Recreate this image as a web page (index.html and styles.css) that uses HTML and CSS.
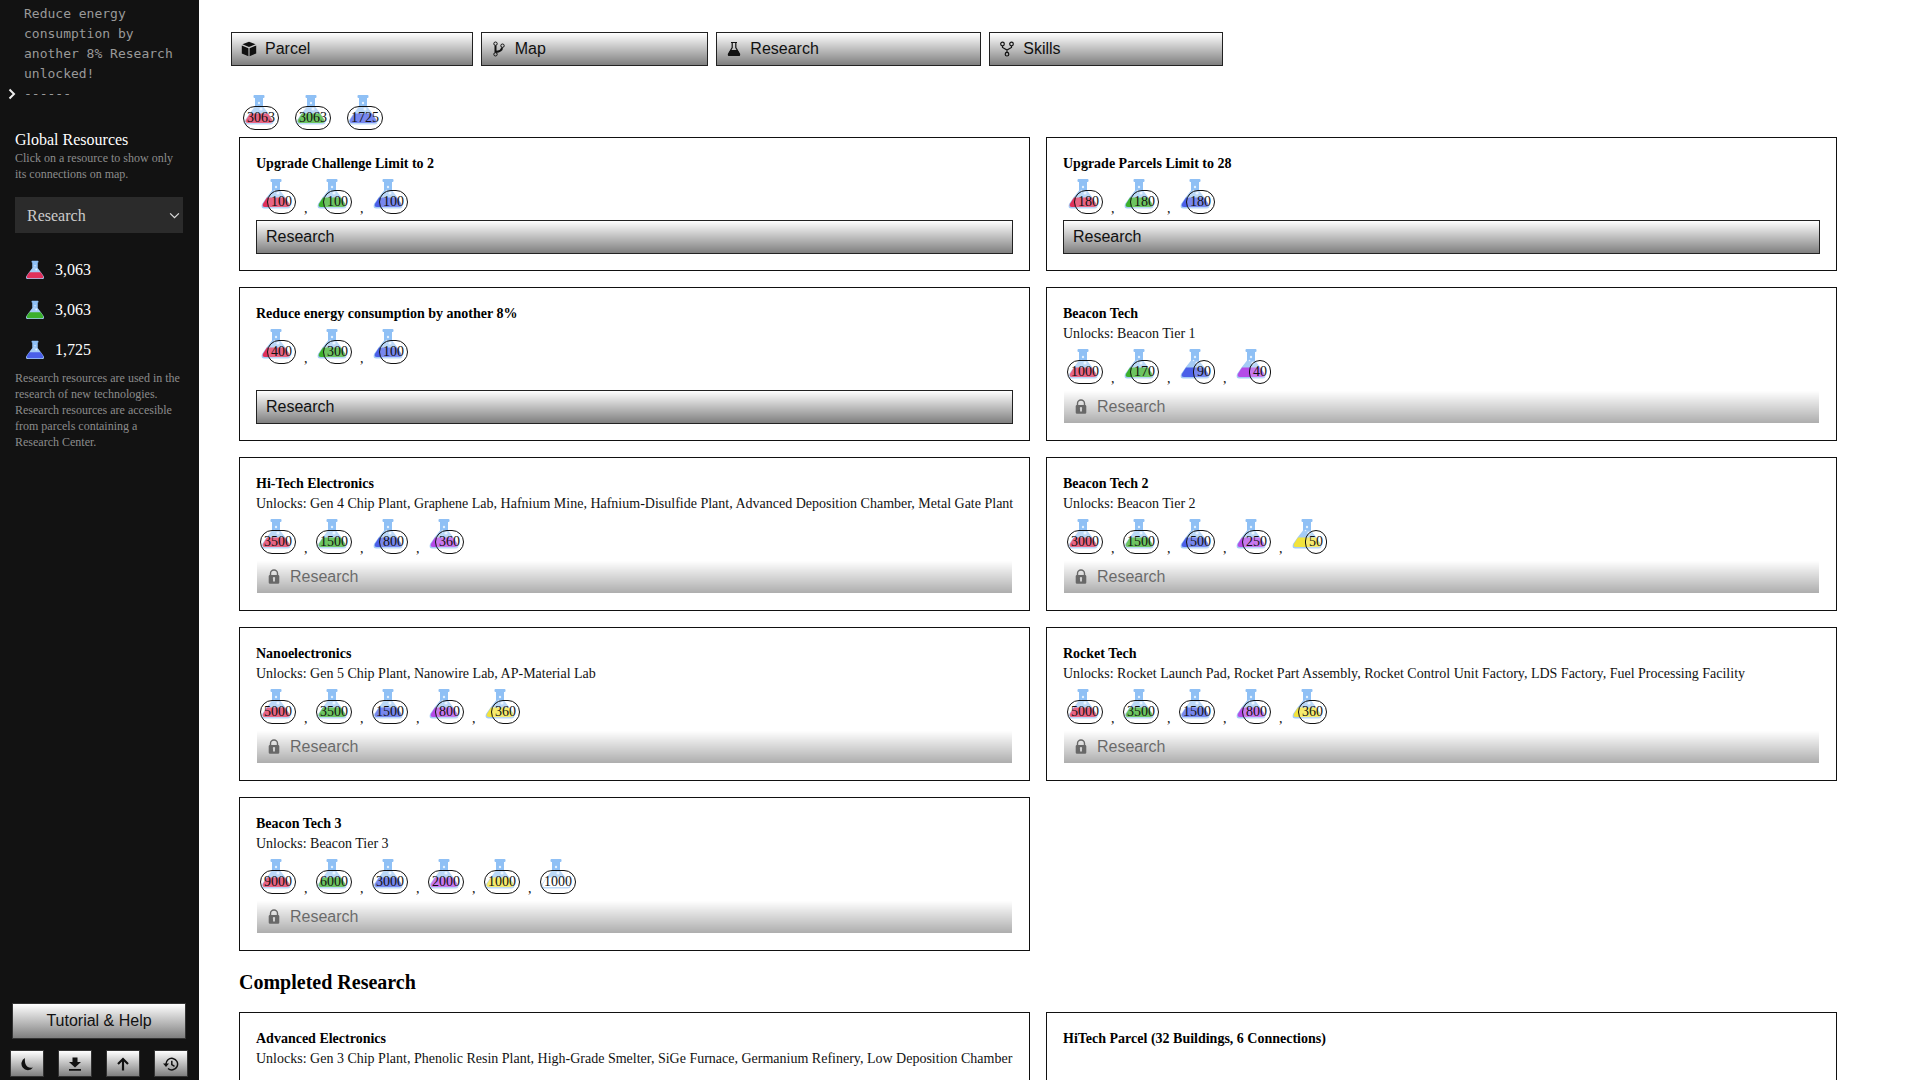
FILE: index.html
```
<!DOCTYPE html>
<html lang="en">
<head>
  <meta charset="UTF-8">
  <title>Research</title>
  <link rel="stylesheet" href="styles.css">
</head>
<body>
  <!-- shared icons -->
  <svg class="sprite" aria-hidden="true">
    <symbol id="flask" viewBox="0 0 32 32">
      <path d="M12 3h8v9.500l5.500 7 4.500 6.500Q31.500 30.500 27.500 30.500h-23Q.5 30.500 2 26l4.500-6.500 5.500-7z" fill="#a4cbf5"/>
      <path d="M7 19.500h18l4 6.200q1.200 3.300-2 3.300H5q-3.200 0-2-3.300z" fill="currentColor"/>
      <path d="M11.500 1h9q1 0 1 1v1q0 1-1 1H20v8.500h-8V4h-.5q-1 0-1-1V2q0-1 1-1z" fill="#8fc0f5"/>
      <circle cx="16" cy="9" r="1.200" fill="#e4f1ff"/>
      <circle cx="18" cy="15" r="1.600" fill="#e4f1ff"/>
      <circle cx="14.500" cy="12.500" r=".8" fill="#e4f1ff"/>
    </symbol>
    <symbol id="lock" viewBox="0 0 16 16">
      <path d="M4.500 7V4.500a3.500 3.500 0 0 1 7 0V7" fill="none" stroke="currentColor" stroke-width="1.400"/>
      <path fill-rule="evenodd" d="M4 6h8q1.300 0 1.300 1.300v6.200q0 1.300-1.300 1.300H4q-1.300 0-1.300-1.300V7.300Q2.700 6 4 6zm3 3.800v2.700h2V9.800a1.200 1.200 0 1 0-2 0z"/>
    </symbol>
  </svg>

  <div class="layout">
    <aside class="sidebar">
      <div class="log">
        <p>Reduce energy consumption by another 8% Research unlocked!</p>
        <p class="log-last">
          <svg class="chevron" viewBox="0 0 8 12"><path d="M1.500 1.500L6 6l-4.500 4.500" fill="none" stroke="currentColor" stroke-width="2"/></svg>
          ------
        </p>
      </div>

      <h2 class="side-title"><label for="resource-type">Global Resources</label></h2>
      <p class="hint">Click on a resource to show only its connections on map.</p>
      <div class="select-wrap">
        <select id="resource-type">
          <option>Research</option>
        </select>
        <svg class="caret" viewBox="0 0 12 8"><path d="M1 1.500l5 5 5-5" fill="none" stroke="currentColor" stroke-width="1.400"/></svg>
      </div>
      <ul class="resources">
        <li><svg class="red"><use href="#flask"/></svg>3,063</li>
        <li><svg class="green"><use href="#flask"/></svg>3,063</li>
        <li><svg class="blue"><use href="#flask"/></svg>1,725</li>
      </ul>
      <p class="hint">Research resources are used in the research of new technologies. Research resources are accesible from parcels containing a Research Center.</p>

      <div class="side-actions">
        <button class="btn btn-help">Tutorial &amp; Help</button>
        <div class="tools">
          <button class="btn btn-tool" aria-label="Dark mode">
            <svg class="icon" viewBox="0 0 16 16"><path d="M6 2A6.400 6.400 0 1 0 14 11.500Q8 12.500 6.500 8 5.500 5 6 2z"/></svg>
          </button>
          <button class="btn btn-tool" aria-label="Download save">
            <svg class="icon" viewBox="0 0 16 16"><path d="M5.500 1.500h5V6H14l-6 5.500L2 6h3.500zM2 13h12v1.800H2z"/></svg>
          </button>
          <button class="btn btn-tool" aria-label="Upload save">
            <svg class="icon" viewBox="0 0 16 16"><path d="M8 14.500V3M3 8l5-5 5 5" fill="none" stroke="currentColor" stroke-width="2.200"/></svg>
          </button>
          <button class="btn btn-tool" aria-label="History">
            <svg class="icon" viewBox="0 0 16 16"><path d="M3 8.500A5.800 5.800 0 1 1 5 12.500M8.800 4.800V8.500l2.700 1.800" fill="none" stroke="currentColor" stroke-width="1.500"/><path d="M0 7.500h6L3 11z"/></svg>
          </button>
        </div>
      </div>
    </aside>

    <main class="main">
      <nav class="tabs">
        <button class="btn">
          <svg class="icon" viewBox="0 0 16 16"><path d="M8 .8l6.600 2.500L8 6 1.400 3.300zM.8 4.500l6.600 2.700v8L.8 12.400zM15.200 4.500L8.600 7.200v8l6.600-2.800z"/></svg>
          Parcel
        </button>
        <button class="btn">
          <svg class="icon" viewBox="0 0 16 16"><g fill="none" stroke="currentColor"><circle cx="4.500" cy="2.700" r="1.700"/><circle cx="4.500" cy="13.300" r="1.700"/><circle cx="11.500" cy="4.700" r="1.700"/><path d="M4.500 4.500v7M4.500 11q6.500-.5 6.500-4.500" stroke-width="2"/></g></svg>
          Map
        </button>
        <button class="btn">
          <svg class="icon" viewBox="0 0 16 16"><path d="M5 1.500h6M6.200 1.500v5L2.500 13q-.5 1.500 1 1.500h9q1.500 0 1-1.500L9.800 6.500v-5" fill="none" stroke="currentColor" stroke-width="1.200"/><path d="M4.500 9h7l2.500 4.500-1 1.500H3l-1-1.500z"/></svg>
          Research
        </button>
        <button class="btn">
          <svg class="icon" viewBox="0 0 16 16"><g fill="none" stroke="currentColor" stroke-width="1.200"><circle cx="3.500" cy="3" r="1.800"/><circle cx="12.500" cy="3" r="1.800"/><circle cx="8" cy="13.200" r="1.800"/><path d="M3.500 5v1.500L8 9l4.500-2.500V5M8 9v2.300"/></g></svg>
          Skills
        </button>
      </nav>

      <section class="content">
        <ul class="costs totals">
          <li><span class="flask red"><svg><use href="#flask"/></svg><b>3063</b></span></li>
          <li><span class="flask green"><svg><use href="#flask"/></svg><b>3063</b></span></li>
          <li><span class="flask blue"><svg><use href="#flask"/></svg><b>1725</b></span></li>
        </ul>

        <div class="cards">
          <article class="card">
            <h3>Upgrade Challenge Limit to 2</h3>
            <ul class="costs">
              <li><span class="flask red"><svg><use href="#flask"/></svg><b>100</b></span>,</li>
              <li><span class="flask green"><svg><use href="#flask"/></svg><b>100</b></span>,</li>
              <li><span class="flask blue"><svg><use href="#flask"/></svg><b>100</b></span></li>
            </ul>
            <button class="btn">Research</button>
          </article>

          <article class="card">
            <h3>Upgrade Parcels Limit to 28</h3>
            <ul class="costs">
              <li><span class="flask red"><svg><use href="#flask"/></svg><b>180</b></span>,</li>
              <li><span class="flask green"><svg><use href="#flask"/></svg><b>180</b></span>,</li>
              <li><span class="flask blue"><svg><use href="#flask"/></svg><b>180</b></span></li>
            </ul>
            <button class="btn">Research</button>
          </article>

          <article class="card">
            <h3>Reduce energy consumption by another 8%</h3>
            <ul class="costs">
              <li><span class="flask red"><svg><use href="#flask"/></svg><b>400</b></span>,</li>
              <li><span class="flask green"><svg><use href="#flask"/></svg><b>300</b></span>,</li>
              <li><span class="flask blue"><svg><use href="#flask"/></svg><b>100</b></span></li>
            </ul>
            <button class="btn">Research</button>
          </article>

          <article class="card">
            <h3>Beacon Tech</h3>
            <p>Unlocks: Beacon Tier 1</p>
            <ul class="costs">
              <li><span class="flask red"><svg><use href="#flask"/></svg><b>1000</b></span>,</li>
              <li><span class="flask green"><svg><use href="#flask"/></svg><b>170</b></span>,</li>
              <li><span class="flask blue"><svg><use href="#flask"/></svg><b>90</b></span>,</li>
              <li><span class="flask purple"><svg><use href="#flask"/></svg><b>40</b></span></li>
            </ul>
            <button class="btn" disabled><svg class="icon"><use href="#lock"/></svg>Research</button>
          </article>

          <article class="card">
            <h3>Hi-Tech Electronics</h3>
            <p>Unlocks: Gen 4 Chip Plant, Graphene Lab, Hafnium Mine, Hafnium-Disulfide Plant, Advanced Deposition Chamber, Metal Gate Plant</p>
            <ul class="costs">
              <li><span class="flask red"><svg><use href="#flask"/></svg><b>3500</b></span>,</li>
              <li><span class="flask green"><svg><use href="#flask"/></svg><b>1500</b></span>,</li>
              <li><span class="flask blue"><svg><use href="#flask"/></svg><b>800</b></span>,</li>
              <li><span class="flask purple"><svg><use href="#flask"/></svg><b>360</b></span></li>
            </ul>
            <button class="btn" disabled><svg class="icon"><use href="#lock"/></svg>Research</button>
          </article>

          <article class="card">
            <h3>Beacon Tech 2</h3>
            <p>Unlocks: Beacon Tier 2</p>
            <ul class="costs">
              <li><span class="flask red"><svg><use href="#flask"/></svg><b>3000</b></span>,</li>
              <li><span class="flask green"><svg><use href="#flask"/></svg><b>1500</b></span>,</li>
              <li><span class="flask blue"><svg><use href="#flask"/></svg><b>500</b></span>,</li>
              <li><span class="flask purple"><svg><use href="#flask"/></svg><b>250</b></span>,</li>
              <li><span class="flask yellow"><svg><use href="#flask"/></svg><b>50</b></span></li>
            </ul>
            <button class="btn" disabled><svg class="icon"><use href="#lock"/></svg>Research</button>
          </article>

          <article class="card">
            <h3>Nanoelectronics</h3>
            <p>Unlocks: Gen 5 Chip Plant, Nanowire Lab, AP-Material Lab</p>
            <ul class="costs">
              <li><span class="flask red"><svg><use href="#flask"/></svg><b>5000</b></span>,</li>
              <li><span class="flask green"><svg><use href="#flask"/></svg><b>3500</b></span>,</li>
              <li><span class="flask blue"><svg><use href="#flask"/></svg><b>1500</b></span>,</li>
              <li><span class="flask purple"><svg><use href="#flask"/></svg><b>800</b></span>,</li>
              <li><span class="flask yellow"><svg><use href="#flask"/></svg><b>360</b></span></li>
            </ul>
            <button class="btn" disabled><svg class="icon"><use href="#lock"/></svg>Research</button>
          </article>

          <article class="card">
            <h3>Rocket Tech</h3>
            <p>Unlocks: Rocket Launch Pad, Rocket Part Assembly, Rocket Control Unit Factory, LDS Factory, Fuel Processing Facility</p>
            <ul class="costs">
              <li><span class="flask red"><svg><use href="#flask"/></svg><b>5000</b></span>,</li>
              <li><span class="flask green"><svg><use href="#flask"/></svg><b>3500</b></span>,</li>
              <li><span class="flask blue"><svg><use href="#flask"/></svg><b>1500</b></span>,</li>
              <li><span class="flask purple"><svg><use href="#flask"/></svg><b>800</b></span>,</li>
              <li><span class="flask yellow"><svg><use href="#flask"/></svg><b>360</b></span></li>
            </ul>
            <button class="btn" disabled><svg class="icon"><use href="#lock"/></svg>Research</button>
          </article>

          <article class="card">
            <h3>Beacon Tech 3</h3>
            <p>Unlocks: Beacon Tier 3</p>
            <ul class="costs">
              <li><span class="flask red"><svg><use href="#flask"/></svg><b>9000</b></span>,</li>
              <li><span class="flask green"><svg><use href="#flask"/></svg><b>6000</b></span>,</li>
              <li><span class="flask blue"><svg><use href="#flask"/></svg><b>3000</b></span>,</li>
              <li><span class="flask purple"><svg><use href="#flask"/></svg><b>2000</b></span>,</li>
              <li><span class="flask yellow"><svg><use href="#flask"/></svg><b>1000</b></span>,</li>
              <li><span class="flask white"><svg><use href="#flask"/></svg><b>1000</b></span></li>
            </ul>
            <button class="btn" disabled><svg class="icon"><use href="#lock"/></svg>Research</button>
          </article>
        </div>

        <h2 class="section-title">Completed Research</h2>
        <div class="cards">
          <article class="card">
            <h3>Advanced Electronics</h3>
            <p>Unlocks: Gen 3 Chip Plant, Phenolic Resin Plant, High-Grade Smelter, SiGe Furnace, Germanium Refinery, Low Deposition Chamber</p>
          </article>
          <article class="card">
            <h3>HiTech Parcel (32 Buildings, 6 Connections)</h3>
          </article>
        </div>
      </section>
    </main>
  </div>
</body>
</html>
```
FILE: styles.css
```
* {
  box-sizing: border-box;
}

body {
  margin: 0;
  font-family: "Liberation Serif", serif;
  font-size: 14px;
  line-height: 20px;
  color: #111;
  background: #fff;
}

h2, h3, p, ul {
  margin: 0;
  padding: 0;
}

ul {
  list-style: none;
}

.sprite {
  display: none;
}

.layout {
  display: flex;
  height: 100vh;
}

/* sidebar */
.sidebar {
  display: flex;
  flex-direction: column;
  width: 199px;
  flex-shrink: 0;
  padding: 4px 11px 3px 10px;
  background: #121212;
  color: #fff;
}

.log {
  padding: 0 0 0 14px;
  margin-bottom: 25px;
  font-family: "DejaVu Sans Mono", monospace;
  font-size: 13px;
  color: #999;
}

.log-last {
  display: flex;
  align-items: center;
  gap: 8px;
  margin-left: -16px;
}

.chevron {
  width: 8px;
  height: 12px;
  color: #eee;
}

.side-title {
  padding: 0 5px;
  font-size: 16px;
  font-weight: normal;
  line-height: 21px;
}

.hint {
  padding: 0 5px;
  font-size: 12px;
  line-height: 16px;
  color: #8c8c8c;
}

.select-wrap {
  position: relative;
  margin: 15px 5px 17px;
}

select {
  appearance: none;
  width: 100%;
  height: 36px;
  padding: 0 12px;
  border: none;
  border-radius: 0;
  background: #2b2b2b;
  color: #ccc;
  font-family: inherit;
  font-size: 16px;
}

.caret {
  position: absolute;
  right: 3px;
  top: 15px;
  width: 11px;
  height: 7px;
  color: #ddd;
}

.resources li {
  display: flex;
  align-items: center;
  gap: 10px;
  height: 40px;
  padding-left: 15px;
  font-size: 16px;
}

.resources svg {
  width: 20px;
  height: 20px;
}

.side-actions {
  margin-top: auto;
}

.tools {
  display: flex;
  justify-content: space-between;
  margin-top: 11px;
}

/* buttons */
.btn {
  display: flex;
  align-items: center;
  gap: 8px;
  height: 34px;
  padding: 0 9px;
  border: 1px solid #222;
  background: linear-gradient(#fff, #7f7f7f);
  color: #111;
  font-family: "Liberation Sans", sans-serif;
  font-size: 16px;
  cursor: pointer;
}

.btn:disabled {
  border-color: transparent;
  background-clip: padding-box;
  opacity: 0.63;
  cursor: default;
}

.icon {
  width: 16px;
  height: 16px;
  fill: currentColor;
}

.btn-help {
  justify-content: center;
  width: 174px;
  height: 36px;
  margin: 0 auto;
  border-color: #333;
}

.btn-tool {
  justify-content: center;
  width: 34px;
  height: 27px;
  padding: 0;
  border-color: #333;
}

/* main area */
.main {
  flex: 1;
  min-width: 0;
  padding: 32px 83px 0 32px;
  overflow-y: auto;
  scrollbar-width: none;
}

.tabs {
  display: flex;
  gap: 8px;
  max-width: 992px;
}

.tabs .btn {
  flex: 1 1 auto;
}

.content {
  padding: 24px 0 24px 8px;
}

.cards {
  display: grid;
  grid-template-columns: 1fr 1fr;
  gap: 16px;
}

.card {
  display: flex;
  flex-direction: column;
  min-width: 0;
  padding: 16px;
  border: 1px solid #111;
}

.card h3 {
  font-size: 14px;
  color: #000;
}

.card p {
  white-space: nowrap;
}

.card .btn {
  margin-top: auto;
}

.section-title {
  margin: 17px 0 16px;
  font-size: 20px;
  line-height: 28px;
  color: #000;
}

/* flasks with amount badges */
.costs {
  display: flex;
  height: 46px;
  padding-top: 4px;
}

.costs li {
  display: flex;
  align-items: flex-end;
  width: 56px;
  height: 41px;
}

.totals {
  margin-bottom: 1px;
}

.totals li {
  width: 52px;
}

.flask {
  position: relative;
  align-self: flex-start;
  width: 32px;
  margin: 0 12px 0 4px;
}

.flask svg {
  display: block;
  width: 32px;
  height: 32px;
}

.flask b {
  position: absolute;
  right: -4px;
  top: 12px;
  height: 24px;
  padding: 1px 3px;
  border: 1px solid #111;
  border-radius: 12px;
  background: rgba(255, 255, 255, 0.25);
  color: #111;
  font-weight: normal;
}

.red { color: #e0305a; }
.green { color: #3cb02c; }
.blue { color: #4a5fe8; }
.purple { color: #b44be8; }
.yellow { color: #f2e33c; }
.white { color: #fff; }

@media (max-width: 1000px) {
  .cards {
    grid-template-columns: 1fr;
  }

  .card p {
    white-space: normal;
  }
}
```
